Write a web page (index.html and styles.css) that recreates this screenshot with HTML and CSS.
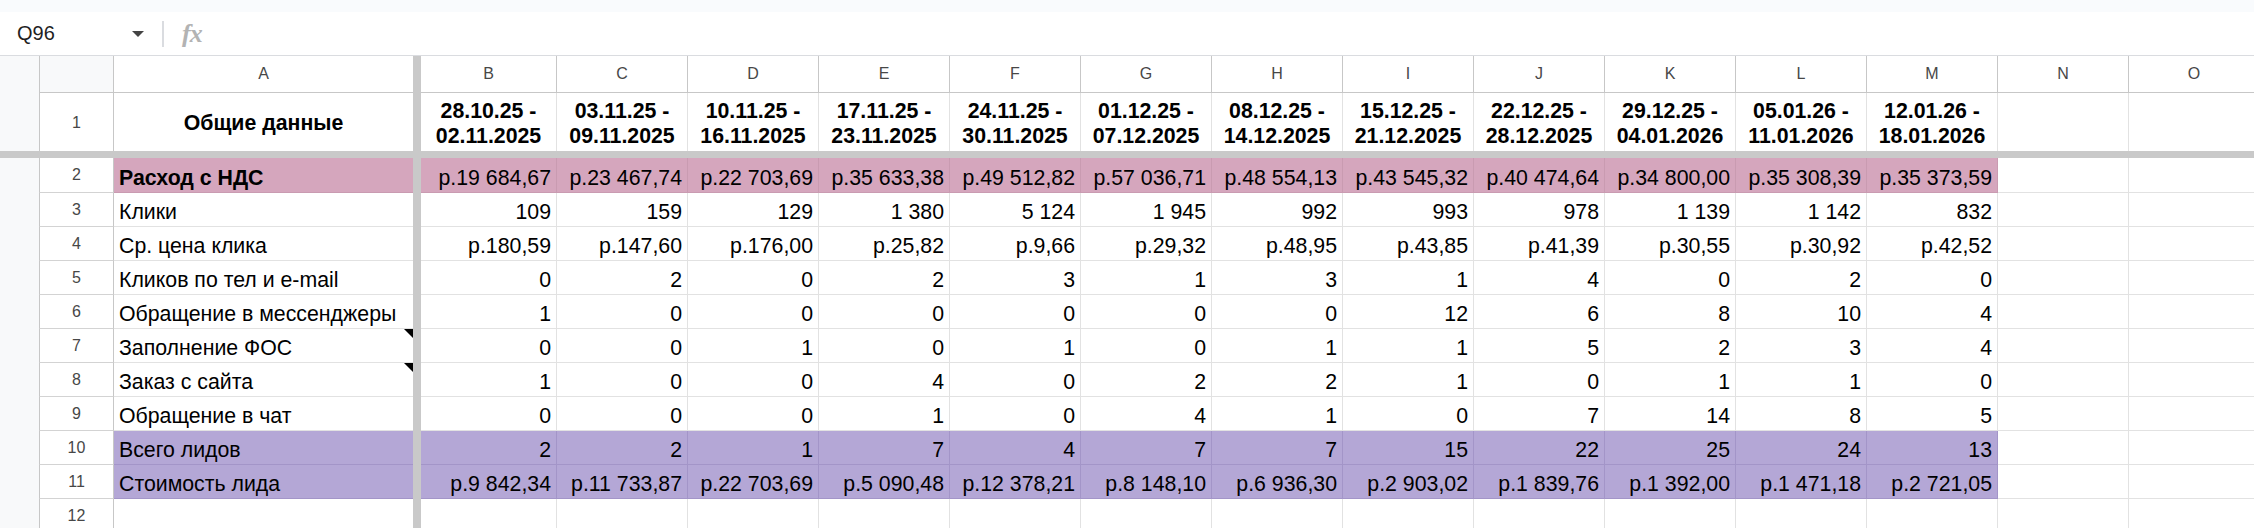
FILE: index.html
```html
<!DOCTYPE html>
<html>
	<head>
		<meta charset="utf-8">
		<title>Общие данные</title>
		<link rel="stylesheet" href="styles.css">
	</head>
	<body>
		<div class="topstrip"></div>
		<div class="fbar">
			<div class="namebox">Q96</div>
			<span class="caret"></span>
			<span class="sep"></span>
			<span class="fx">fx</span>
		</div>
		<div class="wrap">
		<table class="grid">
			<colgroup>
				<col class="c-gut"><col class="c-rh"><col class="c-a"><col class="c-fz"><col class="c-b">
				<col class="c-n"><col class="c-n"><col class="c-n"><col class="c-n"><col class="c-n"><col class="c-n">
				<col class="c-n"><col class="c-n"><col class="c-n"><col class="c-n"><col class="c-n"><col class="c-n">
				<col class="c-n">
			</colgroup>
			<!-- буквы столбцов -->
			<tr class="hdr">
				<td class="gut"></td><td class="corner"></td><td class="ch">A</td><td class="fz"></td>
				<td class="ch">B</td><td class="ch">C</td><td class="ch">D</td><td class="ch">E</td><td class="ch">F</td><td class="ch">G</td>
				<td class="ch">H</td><td class="ch">I</td><td class="ch">J</td><td class="ch">K</td><td class="ch">L</td><td class="ch">M</td>
				<td class="ch">N</td><td class="ch">O</td>
			</tr>
			<!-- строка 1: периоды -->
			<tr class="r1">
				<td class="gut"></td><td class="rh">1</td><td class="title">Общие данные</td><td class="fz"></td>
				<td class="date">28.10.25 -<br>02.11.2025</td>
				<td class="date">03.11.25 -<br>09.11.2025</td>
				<td class="date">10.11.25 -<br>16.11.2025</td>
				<td class="date">17.11.25 -<br>23.11.2025</td>
				<td class="date">24.11.25 -<br>30.11.2025</td>
				<td class="date">01.12.25 -<br>07.12.2025</td>
				<td class="date">08.12.25 -<br>14.12.2025</td>
				<td class="date">15.12.25 -<br>21.12.2025</td>
				<td class="date">22.12.25 -<br>28.12.2025</td>
				<td class="date">29.12.25 -<br>04.01.2026</td>
				<td class="date">05.01.26 -<br>11.01.2026</td>
				<td class="date">12.01.26 -<br>18.01.2026</td>
				<td class="date"></td><td class="date"></td>
			</tr>
			<tr class="fzrow"><td colspan="18"></td></tr>
			<tr class="row r2 pink">
				<td class="gut"></td><td class="rh">2</td><td class="lbl b">Расход с НДС</td><td class="fz"></td>
				<td>р.19 684,67</td><td>р.23 467,74</td><td>р.22 703,69</td><td>р.35 633,38</td><td>р.49 512,82</td><td>р.57 036,71</td>
				<td>р.48 554,13</td><td>р.43 545,32</td><td>р.40 474,64</td><td>р.34 800,00</td><td>р.35 308,39</td><td>р.35 373,59</td>
				<td class="blank"></td><td class="blank"></td>
			</tr>
			<tr class="row">
				<td class="gut"></td><td class="rh">3</td><td class="lbl">Клики</td><td class="fz"></td>
				<td>109</td><td>159</td><td>129</td><td>1 380</td><td>5 124</td><td>1 945</td>
				<td>992</td><td>993</td><td>978</td><td>1 139</td><td>1 142</td><td>832</td>
				<td></td><td></td>
			</tr>
			<tr class="row">
				<td class="gut"></td><td class="rh">4</td><td class="lbl">Ср. цена клика</td><td class="fz"></td>
				<td>р.180,59</td><td>р.147,60</td><td>р.176,00</td><td>р.25,82</td><td>р.9,66</td><td>р.29,32</td>
				<td>р.48,95</td><td>р.43,85</td><td>р.41,39</td><td>р.30,55</td><td>р.30,92</td><td>р.42,52</td>
				<td></td><td></td>
			</tr>
			<tr class="row">
				<td class="gut"></td><td class="rh">5</td><td class="lbl">Кликов по тел и e-mail</td><td class="fz"></td>
				<td>0</td><td>2</td><td>0</td><td>2</td><td>3</td><td>1</td>
				<td>3</td><td>1</td><td>4</td><td>0</td><td>2</td><td>0</td>
				<td></td><td></td>
			</tr>
			<tr class="row">
				<td class="gut"></td><td class="rh">6</td><td class="lbl">Обращение в мессенджеры</td><td class="fz"></td>
				<td>1</td><td>0</td><td>0</td><td>0</td><td>0</td><td>0</td>
				<td>0</td><td>12</td><td>6</td><td>8</td><td>10</td><td>4</td>
				<td></td><td></td>
			</tr>
			<tr class="row">
				<td class="gut"></td><td class="rh">7</td><td class="lbl note">Заполнение ФОС</td><td class="fz"></td>
				<td>0</td><td>0</td><td>1</td><td>0</td><td>1</td><td>0</td>
				<td>1</td><td>1</td><td>5</td><td>2</td><td>3</td><td>4</td>
				<td></td><td></td>
			</tr>
			<tr class="row">
				<td class="gut"></td><td class="rh">8</td><td class="lbl note">Заказ с сайта</td><td class="fz"></td>
				<td>1</td><td>0</td><td>0</td><td>4</td><td>0</td><td>2</td>
				<td>2</td><td>1</td><td>0</td><td>1</td><td>1</td><td>0</td>
				<td></td><td></td>
			</tr>
			<tr class="row">
				<td class="gut"></td><td class="rh">9</td><td class="lbl">Обращение в чат</td><td class="fz"></td>
				<td>0</td><td>0</td><td>0</td><td>1</td><td>0</td><td>4</td>
				<td>1</td><td>0</td><td>7</td><td>14</td><td>8</td><td>5</td>
				<td></td><td></td>
			</tr>
			<tr class="row purple">
				<td class="gut"></td><td class="rh">10</td><td class="lbl">Всего лидов</td><td class="fz"></td>
				<td>2</td><td>2</td><td>1</td><td>7</td><td>4</td><td>7</td>
				<td>7</td><td>15</td><td>22</td><td>25</td><td>24</td><td>13</td>
				<td class="blank"></td><td class="blank"></td>
			</tr>
			<tr class="row purple">
				<td class="gut"></td><td class="rh">11</td><td class="lbl">Стоимость лида</td><td class="fz"></td>
				<td>р.9 842,34</td><td>р.11 733,87</td><td>р.22 703,69</td><td>р.5 090,48</td><td>р.12 378,21</td><td>р.8 148,10</td>
				<td>р.6 936,30</td><td>р.2 903,02</td><td>р.1 839,76</td><td>р.1 392,00</td><td>р.1 471,18</td><td>р.2 721,05</td>
				<td class="blank"></td><td class="blank"></td>
			</tr>
			<tr class="row">
				<td class="gut"></td><td class="rh">12</td><td class="lbl"></td><td class="fz"></td>
				<td></td><td></td><td></td><td></td><td></td><td></td>
				<td></td><td></td><td></td><td></td><td></td><td></td>
				<td></td><td></td>
			</tr>
		</table>
		</div>
	</body>
</html>
```

FILE: styles.css
```css
*{margin: 0;padding: 0;box-sizing: border-box;}
html,body{width: 2254px;height: 528px;overflow: hidden;}
body{background: #f8f9fa;font-family: "Liberation Sans", Arial, sans-serif;color: #000;}

/* полоса сверху и строка формул */
.topstrip{height: 12px;background: #f9fbfd;}
.fbar{height: 44px;background: #fff;border-bottom: 1px solid #dadce0;
	display: flex;align-items: center;}
.namebox{width: 132px;padding-left: 17px;font-size: 20px;color: #1f1f1f;}
.caret{width: 0;height: 0;
	border-left: 6px solid transparent;
	border-right: 6px solid transparent;
	border-top: 6px solid #444;}
.sep{width: 2px;height: 26px;background: #dadce0;margin-left: 18px;}
.fx{margin-left: 18px;font: italic bold 26px "Liberation Serif", serif;color: #b3b3b3;letter-spacing: -1px;}

/* таблица */
.wrap{width: 2254px;overflow: hidden;}
.grid{table-layout: fixed;width: 2260px;border-collapse: separate;border-spacing: 0;}
.c-gut{width: 39px;}
.c-rh{width: 75px;}
.c-a{width: 299px;}
.c-fz{width: 8px;}
.c-b{width: 136px;}
.c-n{width: 131px;}

.grid td{font-size: 21.3px;white-space: nowrap;overflow: hidden;
	border-right: 1px solid #e2e2e2;border-bottom: 1px solid #e2e2e2;
	background: #fff;padding: 0 5px 2px;text-align: right;vertical-align: bottom;line-height: 24px;}
.grid td.gut{background: #f8f9fa;border: none;padding: 0;}
.grid td.fz{background: #c9c9c9;border: none;padding: 0;}

.hdr{height: 37px;}
.grid .hdr td{border-right-color: #c7c7c7;border-bottom-color: #c7c7c7;}
.grid td.corner{background: #f8f9fa;border-left: 1px solid #c7c7c7;}
.grid td.ch{font-size: 16px;color: #474747;text-align: center;vertical-align: middle;padding: 0;}
.grid .hdr td.ch:nth-child(3){border-right: none;}

.grid td.rh{font-size: 16px;color: #474747;text-align: center;vertical-align: middle;padding: 0;
	border-left: 1px solid #c7c7c7;border-right-color: #c7c7c7;border-bottom-color: #d3d3d3;}

.r1{height: 58px;}
.grid .r1 td{border-bottom: none;vertical-align: middle;text-align: center;font-weight: bold;line-height: 25px;padding: 3px 2px 0;}
.grid .r1 td.rh{font-weight: normal;padding: 0;}
.grid .r1 td.title{border-right: none;}

.fzrow{height: 7px;}
.grid .fzrow td{background: #c9c9c9;border: none;padding: 0;}

.row{height: 34px;}
.r2{height: 35px;}
.grid td.lbl{text-align: left;border-right: none;position: relative;}
.grid td.b{font-weight: bold;}

.grid .pink td{background: #d5a6bd;border-color: #c99bb1;}
.grid .purple td{background: #b4a7d6;border-color: #a395c8;}
.grid .pink td.gut,.grid .purple td.gut{background: #f8f9fa;}
.grid .pink td.fz,.grid .purple td.fz{background: #c9c9c9;}
.grid .pink td.rh,.grid .purple td.rh{background: #fff;border-right-color: #c7c7c7;border-bottom-color: #d3d3d3;border-left-color: #c7c7c7;}
.grid .pink td.blank,.grid .purple td.blank{background: #fff;border-color: #e2e2e2;}

/* треугольник примечания */
.note:after{content: "";position: absolute;top: 0;right: 0;
	width: 0;height: 0;
	border-top: 9px solid #000;
	border-left: 9px solid transparent;}
```
